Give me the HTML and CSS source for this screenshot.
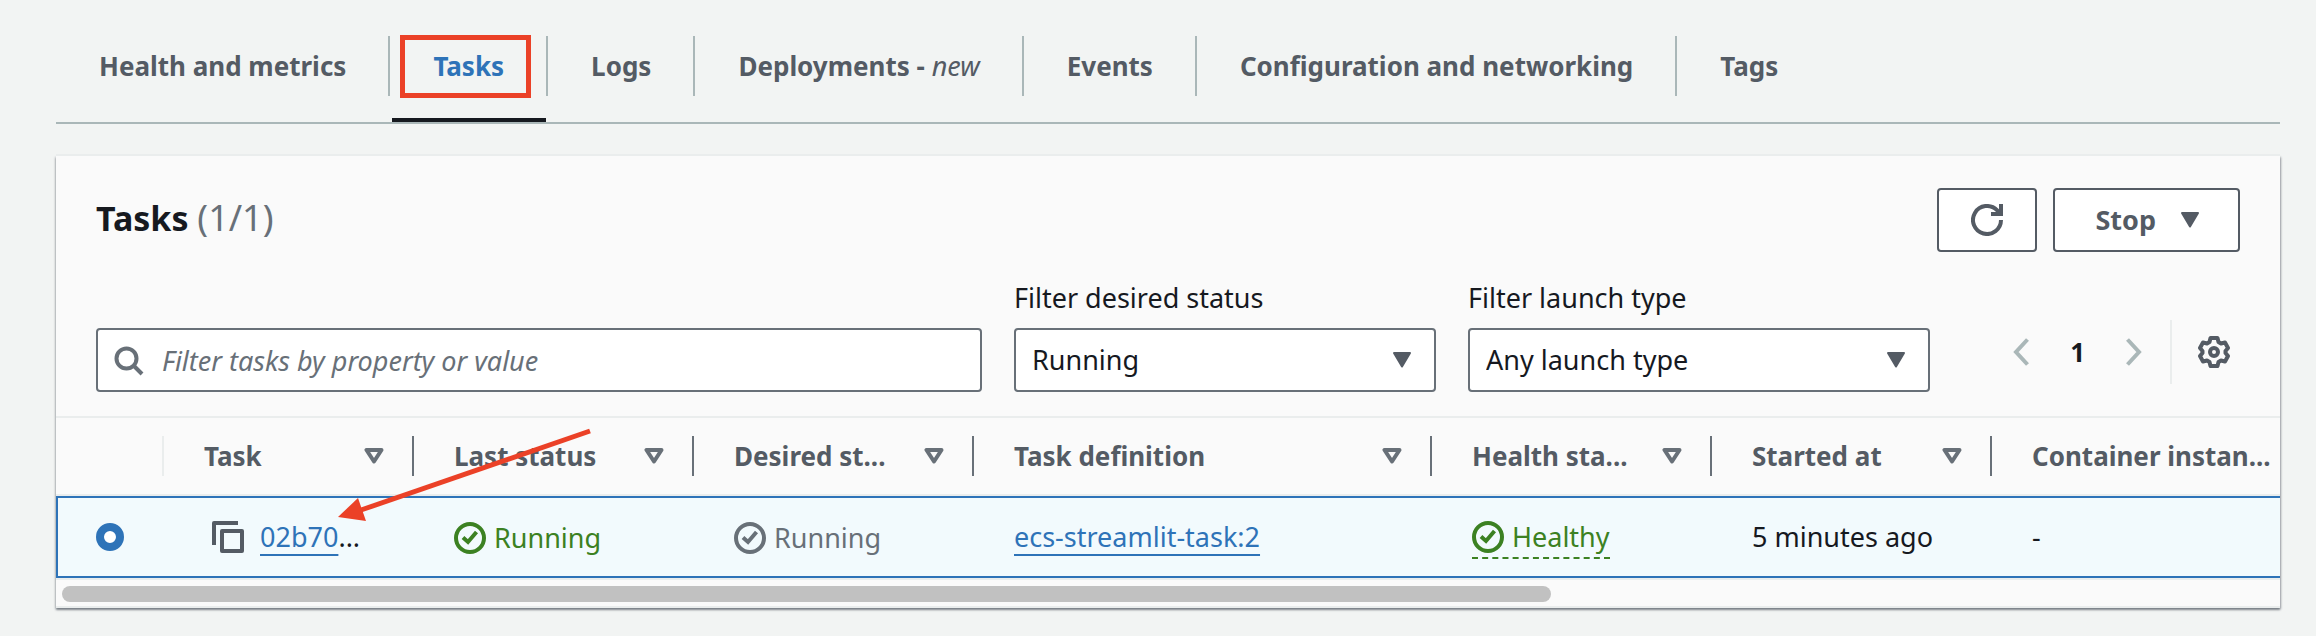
FILE: index.html
```html
<!DOCTYPE html>
<html lang="en">
<head>
<meta charset="utf-8">
<title>Tasks</title>
<link rel="stylesheet" href="styles.css">
</head>
<body>
<svg class="sprite" aria-hidden="true">
  <symbol id="caret" viewBox="0 0 20 16"><path d="M2 1h16L10 14.500z" fill="currentColor" stroke="currentColor" stroke-width="2" stroke-linejoin="round"/></symbol>
  <symbol id="sort" viewBox="0 0 20 16"><path d="M2.500 2h15L10 13.500z" fill="none" stroke="currentColor" stroke-width="4" stroke-linejoin="round"/></symbol>
  <symbol id="check" viewBox="0 0 32 32"><g fill="none" stroke="currentColor" stroke-width="4"><circle cx="16" cy="16" r="14"/><path d="M9 15.500l5 4.500 8.500-10"/></g></symbol>
</svg>
<main class="page">
  <nav aria-label="Service sections">
    <ul class="tabs">
      <li class="tab"><a href="#health">Health and metrics</a></li>
      <li class="tab tab-active"><a href="#tasks" aria-current="page">Tasks</a><span class="highlight"></span></li>
      <li class="tab"><a href="#logs">Logs</a></li>
      <li class="tab"><a href="#deployments">Deployments - <em>new</em></a></li>
      <li class="tab"><a href="#events">Events</a></li>
      <li class="tab"><a href="#configuration">Configuration and networking</a></li>
      <li class="tab"><a href="#tags">Tags</a></li>
    </ul>
  </nav>

  <section class="card">
    <header class="card-header">
      <h2 class="title">Tasks <span class="count">(1/1)</span></h2>
      <div class="actions">
        <button class="button button-icon" type="button" aria-label="Refresh">
          <svg width="32" height="32" viewBox="0 0 32 32" fill="none" stroke="currentColor" stroke-width="4"><path d="M30 16a14 14 0 1 1-4-9.800L29 9.500"/><path d="M30 0v10H20"/></svg>
        </button>
        <button class="button" type="button">Stop <svg width="20" height="16"><use href="#caret"/></svg></button>
      </div>
    </header>

    <div class="filters">
      <div class="search">
        <svg class="search-icon" width="30" height="30" viewBox="0 0 30 30" fill="none" stroke="currentColor" stroke-width="4"><circle cx="12.500" cy="12.500" r="10"/><path d="M19.500 19.500l8.500 8.500"/></svg>
        <input class="control search-input" type="text" aria-label="Filter tasks" placeholder="Filter tasks by property or value">
      </div>
      <div class="field">
        <label for="status">Filter desired status</label>
        <div class="select">
          <select class="control" id="status"><option>Running</option></select>
          <svg class="select-caret" width="20" height="16"><use href="#caret"/></svg>
        </div>
      </div>
      <div class="field">
        <label for="launch">Filter launch type</label>
        <div class="select">
          <select class="control" id="launch"><option>Any launch type</option></select>
          <svg class="select-caret" width="20" height="16"><use href="#caret"/></svg>
        </div>
      </div>
      <div class="pagination">
        <button class="plain arrow" type="button" aria-label="Previous page"><svg width="16" height="28" viewBox="0 0 16 28" fill="none" stroke="currentColor" stroke-width="4"><path d="M14.500 1.500L3 14l11.500 12.500"/></svg></button>
        <button class="plain page-number" type="button">1</button>
        <button class="plain arrow" type="button" aria-label="Next page"><svg width="16" height="28" viewBox="0 0 16 28" fill="none" stroke="currentColor" stroke-width="4"><path d="M1.500 1.500L13 14 1.500 26.500"/></svg></button>
        <span class="settings">
          <button class="plain" type="button" aria-label="Settings"><svg width="32" height="32" viewBox="0 0 32 32" fill="none" stroke="currentColor" stroke-width="4" stroke-linejoin="round"><path d="M12.500 2h7l1 4 2.500 1.500 4-1 3 5.500-2.500 3v2l2.500 3-3 5.500-4-1-2.500 1.500-1 4h-7l-1-4L9 24.500l-4 1L2 20l2.500-3v-2L2 12l3-5.500 4 1L11.500 6z"/><circle cx="16" cy="16" r="4"/></svg></button>
        </span>
      </div>
    </div>

    <div class="table-wrap">
      <table class="table">
        <colgroup><col class="c-pick"><col class="c-task"><col class="c-mid"><col class="c-mid"><col class="c-def"><col class="c-mid"><col class="c-mid"><col></colgroup>
        <thead>
          <tr>
            <th><div class="head head-light"></div></th>
            <th><div class="head"><span>Task</span><svg width="20" height="16"><use href="#sort"/></svg></div></th>
            <th><div class="head"><span>Last status</span><svg width="20" height="16"><use href="#sort"/></svg></div></th>
            <th><div class="head"><span>Desired st...</span><svg width="20" height="16"><use href="#sort"/></svg></div></th>
            <th><div class="head"><span>Task definition</span><svg width="20" height="16"><use href="#sort"/></svg></div></th>
            <th><div class="head"><span>Health sta...</span><svg width="20" height="16"><use href="#sort"/></svg></div></th>
            <th><div class="head"><span>Started at</span><svg width="20" height="16"><use href="#sort"/></svg></div></th>
            <th><div class="head head-last"><span>Container instan...</span></div></th>
          </tr>
        </thead>
        <tbody>
          <tr>
            <td><input class="radio" type="radio" name="task" aria-label="Select task 02b70" checked></td>
            <td><div class="task-id"><button class="plain" type="button" aria-label="Copy task ID"><svg width="32" height="32" viewBox="0 0 32 32" fill="none" stroke="currentColor" stroke-width="4" stroke-linejoin="round"><path d="M26 2H2v22"/><path d="M10 10h20v20H10z"/></svg></button><span><a class="link" href="#task">02b70</a>...</span></div></td>
            <td><span class="status ok"><svg width="32" height="32"><use href="#check"/></svg>Running</span></td>
            <td><span class="status muted"><svg width="32" height="32"><use href="#check"/></svg>Running</span></td>
            <td><a class="link" href="#definition">ecs-streamlit-task:2</a></td>
            <td><span class="status ok dashed"><svg width="32" height="32"><use href="#check"/></svg>Healthy</span></td>
            <td>5 minutes ago</td>
            <td>-</td>
          </tr>
        </tbody>
      </table>
      <svg class="pointer" width="256" height="96" viewBox="0 0 256 96" aria-hidden="true"><path d="M253 3L24 82" stroke="#eb4127" stroke-width="5"/><path d="M1 89l20-19 8 23z" fill="#eb4127"/></svg>
    </div>
    <div class="scroll"><div class="scroll-thumb"></div></div>
  </section>
</main>
</body>
</html>
```
FILE: styles.css
```css
* { box-sizing: border-box; }

body {
  margin: 0;
  background: #f2f4f3;
  color: #16191f;
  font: 27px/40px "Noto Sans", "Open Sans", sans-serif;
}

button, input, select { font: inherit; color: inherit; }
svg { display: block; flex: none; }
.sprite { position: absolute; width: 0; height: 0; }
.page { padding: 0 36px 28px 56px; }

.tabs {
  display: flex;
  margin: 0 0 32px;
  padding: 36px 0 26px;
  list-style: none;
  border-bottom: 2px solid #aab7b8;
}
.tab {
  position: relative;
  padding: 10px 42px 10px 43px;
  border-right: 2px solid #aab7b8;
  font-size: 26px;
  font-weight: 700;
  white-space: nowrap;
}
.tab:last-child { border-right: 0; }
.tab a { color: #545b64; text-decoration: none; }
.tab em { font-size: 27px; font-weight: 400; }
.tab-active a { color: #2e73b8; }
.tab-active::after {
  content: "";
  position: absolute;
  left: 2px;
  right: 0;
  bottom: -26px;
  height: 4px;
  background: #16191f;
}
.highlight {
  position: absolute;
  inset: -1px 15px -2px 10px;
  border: 5px solid #eb4127;
}

.card {
  background: #fafafa;
  border-bottom: 2px solid #eaeded;
  box-shadow: 0 -2px 0 #eaeded, 0 2px 2px #545b6499, 1px 1px 2px #545b6466, -1px 1px 2px #545b6433;
}
.card-header {
  display: flex;
  align-items: center;
  justify-content: space-between;
  padding: 32px 40px 26px;
}
.title { margin: 0; padding-bottom: 4px; font-size: 34px; line-height: 40px; }
.count { color: #687078; font-size: 36px; font-weight: 400; }
.actions { display: flex; gap: 16px; }
.button {
  display: flex;
  align-items: center;
  gap: 24px;
  height: 64px;
  padding: 0 38px 0 40px;
  background: #fff;
  border: 2px solid #545b64;
  border-radius: 4px;
  color: #545b64;
  font-weight: 700;
}
.button-icon { padding: 0 32px; }

.filters {
  display: grid;
  grid-template-columns: 886fr 422fr 462fr 278fr;
  gap: 32px;
  align-items: end;
  padding: 0 40px 24px;
}
.search, .select { position: relative; }
.search-icon { position: absolute; left: 18px; top: 18px; color: #687078; }
.control {
  display: block;
  width: 100%;
  height: 64px;
  padding: 0 64px 0 16px;
  background: #fff;
  border: 2px solid #687078;
  border-radius: 4px;
  appearance: none;
}
.search-input { padding: 0 20px 0 64px; }
.search-input::placeholder { color: #687078; font-style: italic; opacity: 1; }
.field { display: grid; gap: 10px; }
.select-caret { position: absolute; right: 24px; top: 24px; color: #545b64; pointer-events: none; }

.pagination {
  display: flex;
  align-items: center;
  justify-content: flex-end;
  padding: 0 10px 8px 0;
}
.plain {
  display: block;
  padding: 0;
  border: 0;
  background: none;
  color: #545b64;
}
.plain.arrow { color: #aab7b8; }
.plain.page-number { padding: 0 41px; color: #16191f; font-size: 26px; font-weight: 700; }
.settings {
  display: flex;
  align-items: center;
  height: 64px;
  margin-left: 28px;
  padding-left: 26px;
  border-left: 2px solid #eaeded;
}

.table-wrap { position: relative; border-top: 2px solid #eaeded; }
.table {
  width: 100%;
  table-layout: fixed;
  border-collapse: separate;
  border-spacing: 0;
}
.c-pick { width: 108px; }
.c-task { width: 250px; }
.c-mid { width: 280px; }
.c-def { width: 458px; }
.table th {
  padding: 18px 0;
  border-bottom: 2px solid #eaeded;
  color: #545b64;
  font-size: 26px;
  text-align: left;
  white-space: nowrap;
}
.head {
  display: flex;
  align-items: center;
  justify-content: space-between;
  height: 40px;
  padding: 0 28px 0 40px;
  border-right: 2px solid #687078;
}
.head svg { color: #687078; }
.head-light { border-color: #eaeded; }
.head-last { padding-right: 0; border-right: 0; }
.table td {
  height: 82px;
  padding: 0 0 0 40px;
  background: #f2fafd;
  border-top: 2px solid #2e73b8;
  border-bottom: 2px solid #2e73b8;
  white-space: nowrap;
}
.table td:first-child { padding-left: 38px; border-left: 2px solid #2e73b8; }
.radio {
  display: block;
  width: 28px;
  height: 28px;
  margin: 0;
  appearance: none;
  background: #fff;
  border: 8px solid #2e73b8;
  border-radius: 50%;
}
.task-id { display: flex; align-items: center; gap: 16px; padding-left: 8px; }
.link { color: #2e73b8; text-decoration: underline; text-decoration-thickness: 2px; text-underline-offset: 7px; }
.status { display: inline-flex; align-items: center; gap: 8px; vertical-align: middle; }
.ok { color: #3c8122; }
.muted { color: #687078; }
.dashed { border-bottom: 2px dashed #3c8122; }
.pointer { position: absolute; left: 281px; top: 10px; }

.scroll { padding: 6px 6px 4px; border-top: 2px solid #eaeded; }
.scroll-thumb { width: 67.3%; height: 16px; border-radius: 8px; background: #c1c1c1; }
```
